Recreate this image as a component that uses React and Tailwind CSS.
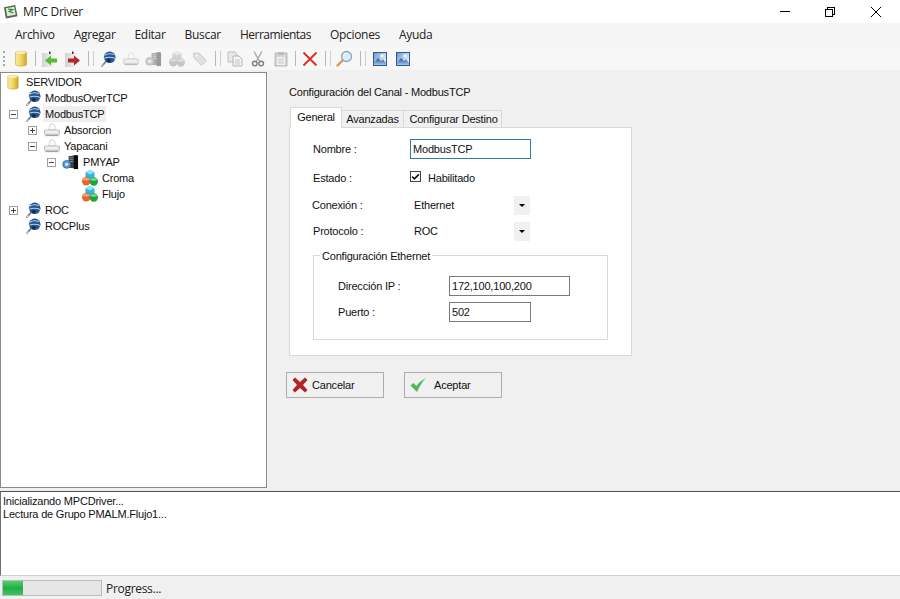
import { Check } from 'lucide-react'

const segoe = { fontFamily: '"Open Sans", "Noto Sans", sans-serif', letterSpacing: '-0.3px' }

function DbIcon({ className = 'w-[12px] h-[17px]' }) {
  return (
    <svg viewBox="0 0 12 17" className={className}>
      <defs>
        <linearGradient id="db" x1="0" x2="1" y1="0" y2="0">
          <stop offset="0" stopColor="#f9eba0" />
          <stop offset="0.5" stopColor="#f4d65c" />
          <stop offset="1" stopColor="#cfa52a" />
        </linearGradient>
      </defs>
      <path d="M0.5 2.5C0.5 0.8 11.5 0.8 11.5 2.5V14.5C11.5 16.6 0.5 16.6 0.5 14.5Z" fill="url(#db)" stroke="#b9983a" strokeWidth="0.5" />
      <ellipse cx="6" cy="2.6" rx="5" ry="1.4" fill="#fbf1b8" />
    </svg>
  )
}

function ChannelIcon() {
  return (
    <svg viewBox="0 0 16 16" className="w-[16px] h-[16px]">
      <path d="M1.5 15.5L6 10.5" stroke="#6f7b88" strokeWidth="1.7" />
      <path d="M0.8 14.8L3.8 14" stroke="#c4ccd4" strokeWidth="1" />
      <circle cx="9.7" cy="6.3" r="5.8" fill="#27558f" />
      <path d="M5 4.2C7 2.6 10 2.2 13.8 3.6M4.2 7.2C7.5 5.8 11.5 6 15.3 7.4" stroke="#b5d0ec" strokeWidth="1.1" fill="none" />
      <circle cx="8.8" cy="9.6" r="1.9" fill="#122f5a" />
    </svg>
  )
}

function DeviceIcon({ muted }) {
  return (
    <svg viewBox="0 0 16 16" className={muted ? 'w-[16px] h-[16px] opacity-70' : 'w-[16px] h-[16px]'}>
      <path d="M4.5 7.5L6.5 2H10L12 7.5Z" fill="#fbfbfb" stroke="#c8c8c8" strokeWidth="0.7" />
      <path d="M0.5 8H15.5V12.5H0.5Z" fill="#e4e4e4" stroke="#bcbcbc" strokeWidth="0.7" />
      <path d="M1.5 13.5H14.5" stroke="#a4a4a4" strokeWidth="1.3" />
      <path d="M3 10H13" stroke="#fafafa" strokeWidth="1.2" />
    </svg>
  )
}

function ServerIcon({ muted }) {
  return (
    <svg viewBox="0 0 18 16" className={muted ? 'w-[17px] h-[16px] opacity-40 grayscale' : 'w-[17px] h-[16px]'}>
      <path d="M7 2L16 0.5V15L7 14Z" fill="#3a3f47" />
      <path d="M12.5 1H17V15.5H12.5Z" fill="#0c0e12" />
      <path d="M8 3.5H12M8 5.5H12M8 7.5H12" stroke="#98a2af" strokeWidth="0.8" />
      <circle cx="5" cy="10.5" r="4.2" fill="#5a9ad0" stroke="#2c5e8d" strokeWidth="0.8" />
      <circle cx="5" cy="10.5" r="1.6" fill="#d9ebf8" />
    </svg>
  )
}

function GroupIcon({ muted }) {
  return (
    <svg viewBox="0 0 16 16" className={muted ? 'w-[16px] h-[16px] opacity-40 grayscale' : 'w-[16px] h-[16px]'}>
      <path d="M8 0L12.5 2.3V7L8 9.3L3.5 7V2.3Z" fill="#2fb3e8" />
      <path d="M3.5 2.3L8 4.6L12.5 2.3L8 0Z" fill="#93e2f8" />
      <circle cx="4.2" cy="11.3" r="4.2" fill="#e4662a" />
      <path d="M0.6 9.5C2 7.6 6.4 7.6 7.8 9.5C6.4 11 2 11 0.6 9.5Z" fill="#f5a677" />
      <circle cx="11.8" cy="11.5" r="4.2" fill="#1fa33a" />
      <path d="M8.2 9.7C9.6 7.8 14 7.8 15.4 9.7C14 11.2 9.6 11.2 8.2 9.7Z" fill="#77da88" />
    </svg>
  )
}

function TagIcon() {
  return (
    <svg viewBox="0 0 16 16" className="w-[16px] h-[16px]">
      <path d="M1.5 2H7L14.5 9.5L9.5 14.5L2 7Z" fill="#e0e0e0" stroke="#c8c8c8" strokeWidth="0.8" />
      <circle cx="4.5" cy="4.8" r="1" fill="#fafafa" />
    </svg>
  )
}

function ArrowDoc({ color, right }) {
  return (
    <svg viewBox="0 0 16 16" className="w-[16px] h-[16px]">
      <defs>
        <linearGradient id="paper" x1="0" x2="1" y1="0" y2="0">
          <stop offset="0" stopColor="#d2d2d2" />
          <stop offset="1" stopColor="#f4f4f4" />
        </linearGradient>
      </defs>
      <path d="M0 2H12V16H0Z" fill="url(#paper)" />
      <path d="M7 0.5H8.5V3H7Z" fill="#333" />
      {right
        ? <path d="M3 7.5H9V4.5L15 9.5L9 14.5V11.5H3Z" fill={color} />
        : <path d="M15 7.5H9V4.5L3 9.5L9 14.5V11.5H15Z" fill={color} />}
    </svg>
  )
}

function CopyIcon() {
  return (
    <svg viewBox="0 0 16 16" className="w-[16px] h-[16px]">
      <path d="M1 1H8L10 3V11H1Z" fill="#e8e8e8" stroke="#b3b3b3" strokeWidth="0.8" />
      <path d="M6 5H12L15 8V15H6Z" fill="#f4f4f4" stroke="#a8a8a8" strokeWidth="0.8" />
      <path d="M8 9H13M8 11H13M8 13H13" stroke="#bdbdbd" strokeWidth="0.8" />
    </svg>
  )
}

function CutIcon() {
  return (
    <svg viewBox="0 0 16 16" className="w-[16px] h-[16px]">
      <path d="M4 0.5L9.5 10M12 0.5L6.5 10" stroke="#a9a9a9" strokeWidth="1.4" />
      <circle cx="4.8" cy="12.5" r="2.3" fill="none" stroke="#7f7f7f" strokeWidth="1.4" />
      <circle cx="11.2" cy="12.5" r="2.3" fill="none" stroke="#7f7f7f" strokeWidth="1.4" />
    </svg>
  )
}

function PasteIcon() {
  return (
    <svg viewBox="0 0 16 16" className="w-[16px] h-[16px]">
      <path d="M2 2H14V15H2Z" fill="#d5d5d5" stroke="#adadad" strokeWidth="0.8" />
      <path d="M5 1H11V4H5Z" fill="#bdbdbd" />
      <path d="M4 6H12V14H4Z" fill="#f2f2f2" />
      <path d="M5 8H11M5 10H11M5 12H11" stroke="#c0c0c0" strokeWidth="0.8" />
    </svg>
  )
}

function MagnifierIcon() {
  return (
    <svg viewBox="0 0 17 17" className="w-[17px] h-[17px]">
      <path d="M1.5 15.5L6.5 10.5" stroke="#d79a52" strokeWidth="2.4" strokeLinecap="round" />
      <circle cx="10.5" cy="6.5" r="5" fill="#d8eefb" stroke="#8fa6b8" strokeWidth="1.3" />
      <path d="M7.5 6C8 4.5 9.5 3.5 11 3.5" stroke="#fff" strokeWidth="1" fill="none" />
    </svg>
  )
}

function PictureIcon() {
  return (
    <svg viewBox="0 0 14 14" className="w-[14px] h-[14px]">
      <defs>
        <linearGradient id="sky" x1="0" x2="1" y1="0" y2="0.6">
          <stop offset="0" stopColor="#6f9bcf" />
          <stop offset="1" stopColor="#e4eef8" />
        </linearGradient>
        <linearGradient id="hill" x1="0" x2="0" y1="0" y2="1">
          <stop offset="0" stopColor="#1f4f92" />
          <stop offset="1" stopColor="#a9c6e6" />
        </linearGradient>
      </defs>
      <path d="M0 0H14V14H0Z" fill="#2a5c9c" />
      <path d="M1 1H13V13H1Z" fill="url(#sky)" />
      <circle cx="9" cy="3.8" r="1.6" fill="#f6f8fb" />
      <path d="M1 11L5 6L8 9L10 7.5L13 11V13H1Z" fill="url(#hill)" />
    </svg>
  )
}

function ToolButton({ children }) {
  return <div className="w-[23px] h-[23px] flex items-center justify-center shrink-0">{children}</div>
}

function ToolSep() {
  return (
    <div className="w-[6px] h-[23px] flex items-center justify-center shrink-0">
      <div className="w-[1px] h-[15px] bg-[#b8b8b8]" />
    </div>
  )
}

function ToolSepDouble() {
  return (
    <div className="w-[12px] h-[23px] flex items-center pl-[4px] gap-[4px] shrink-0">
      <div className="w-[1px] h-[15px] bg-[#b8b8b8]" />
      <div className="w-[1px] h-[15px] bg-[#cfcfcf]" />
    </div>
  )
}

function Expander({ open }) {
  return (
    <div className="w-[19px] h-[16px] flex items-center justify-center shrink-0">
      <div className="w-[9px] h-[9px] border border-[#a0a0a0] bg-white flex items-center justify-center relative">
        <div className="w-[5px] h-[1px] bg-[#444]" />
        {!open && <div className="absolute w-[1px] h-[5px] bg-[#444]" />}
      </div>
    </div>
  )
}

function TreeRow({ indent, expander, icon, selected, children }) {
  return (
    <div className={`flex items-center h-[16px] ${indent}`}>
      {expander ? <Expander open={expander === 'open'} /> : <div className="w-[19px] shrink-0" />}
      <div className="w-[19px] h-[16px] flex items-center justify-center shrink-0">{icon}</div>
      <span className={selected ? 'ml-[1px] px-[2px] h-[16px] leading-[16px] bg-[#efefef]' : 'ml-[1px] px-[2px] h-[16px] leading-[16px]'}>
        {children}
      </span>
    </div>
  )
}

function FieldLabel({ children, className = 'w-[97px]' }) {
  return <div className={`${className} shrink-0`}>{children}</div>
}

function DropArrow() {
  return (
    <div className="w-[16px] h-[19px] bg-[#f0f0f0] flex items-center justify-center">
      <div className="border-x-[3px] border-x-transparent border-t-[3px] border-t-black" />
    </div>
  )
}

function SelectRow({ label, value, rowClass, labelClass }) {
  return (
    <div className={`flex items-center ${rowClass}`}>
      <FieldLabel className={labelClass}>{label}</FieldLabel>
      <div className="w-[100px]">{value}</div>
      <DropArrow />
    </div>
  )
}

export default function App() {
  return (
    <div className="w-[900px] h-[599px] flex flex-col overflow-hidden bg-[#f0f0f0] text-[11px] tracking-[-0.2px] text-[#111]" style={{ fontFamily: '"Liberation Sans", Arial, sans-serif' }}>
      <div className="h-[23px] bg-white flex items-center shrink-0">
        <svg viewBox="0 0 16 16" className="w-[15px] h-[15px] ml-[3px]">
          <path d="M1 3.5L13 1L15.5 13L3 15.5Z" fill="#59665a" />
          <path d="M3 4.5L12 3L13.5 11.5L4.5 13Z" fill="#dcefd2" />
          <path d="M5.5 5.5L10.5 6L6.5 8L11 9.5" stroke="#2f8f3f" strokeWidth="1.2" fill="none" />
        </svg>
        <span className="ml-[5px] text-[12px] text-[#222]" style={segoe}>MPC Driver</span>
        <div className="ml-auto flex items-center">
          <div className="w-[10px] h-[1px] bg-black mr-[35px]" />
          <div className="relative w-[10px] h-[10px] mr-[36px]">
            <div className="absolute right-0 top-0 w-[8px] h-[8px] border border-black" />
            <div className="absolute left-0 bottom-0 w-[8px] h-[8px] border border-black bg-white" />
          </div>
          <svg viewBox="0 0 10 10" className="w-[10px] h-[10px] mr-[19px]">
            <path d="M0 0L10 10M10 0L0 10" stroke="#000" strokeWidth="1" />
          </svg>
        </div>
      </div>

      <div className="h-[24px] bg-[#f5f5f5] flex items-center pl-[15px] gap-[19px] shrink-0 text-[12px] text-[#222]" style={segoe}>
        <span>Archivo</span>
        <span>Agregar</span>
        <span>Editar</span>
        <span>Buscar</span>
        <span className="tracking-[-0.5px]">Herramientas</span>
        <span>Opciones</span>
        <span>Ayuda</span>
      </div>

      <div className="h-[23px] bg-[#f7f7f7] flex items-center shrink-0">
        <div className="ml-[3px] mr-[3px] w-[3px] h-[15px] border-l-2 border-dotted border-[#a8a8a8]" />
        <ToolButton><DbIcon /></ToolButton>
        <ToolSep />
        <ToolButton><ArrowDoc color="#58bb32" /></ToolButton>
        <ToolButton><ArrowDoc color="#b3262a" right /></ToolButton>
        <ToolSepDouble />
        <ToolButton><ChannelIcon /></ToolButton>
        <ToolButton><DeviceIcon muted /></ToolButton>
        <ToolButton><ServerIcon muted /></ToolButton>
        <ToolButton><GroupIcon muted /></ToolButton>
        <ToolButton><TagIcon /></ToolButton>
        <ToolSepDouble />
        <ToolButton><CopyIcon /></ToolButton>
        <ToolButton><CutIcon /></ToolButton>
        <ToolButton><PasteIcon /></ToolButton>
        <ToolSep />
        <ToolButton>
          <svg viewBox="0 0 14 14" className="w-[14px] h-[14px]">
            <path d="M0.5 0.5L13.5 13.5M13.5 0.5L0.5 13.5" stroke="#d8342c" strokeWidth="2" />
          </svg>
        </ToolButton>
        <ToolSepDouble />
        <ToolButton><MagnifierIcon /></ToolButton>
        <ToolSepDouble />
        <ToolButton><PictureIcon /></ToolButton>
        <ToolButton><PictureIcon /></ToolButton>
      </div>

      <div className="flex-1 flex min-h-0">
        <div className="w-[267px] mt-[2px] mb-[3px] border border-[#8a8a8a] bg-white pt-[1px] shrink-0">
          <div className="flex items-center h-[16px] pl-[6px]">
            <div className="w-[12px] h-[16px] flex items-center justify-center shrink-0"><DbIcon className="w-[12px] h-[16px]" /></div>
            <span className="ml-[7px]">SERVIDOR</span>
          </div>
          <TreeRow indent="pl-[3px]" icon={<ChannelIcon />}>ModbusOverTCP</TreeRow>
          <TreeRow indent="pl-[3px]" expander="open" icon={<ChannelIcon />} selected>ModbusTCP</TreeRow>
          <TreeRow indent="pl-[22px]" expander="closed" icon={<DeviceIcon />}>Absorcion</TreeRow>
          <TreeRow indent="pl-[22px]" expander="open" icon={<DeviceIcon />}>Yapacani</TreeRow>
          <TreeRow indent="pl-[41px]" expander="open" icon={<ServerIcon />}>PMYAP</TreeRow>
          <TreeRow indent="pl-[60px]" icon={<GroupIcon />}>Croma</TreeRow>
          <TreeRow indent="pl-[60px]" icon={<GroupIcon />}>Flujo</TreeRow>
          <TreeRow indent="pl-[3px]" expander="closed" icon={<ChannelIcon />}>ROC</TreeRow>
          <TreeRow indent="pl-[3px]" icon={<ChannelIcon />}>ROCPlus</TreeRow>
        </div>

        <div className="flex-1 pl-[19px] pt-[15px]">
          <div className="ml-[3px] h-[14px] leading-[14px]">Configuración del Canal - ModbusTCP</div>
          <div className="flex ml-[3px] mt-[10px] h-[18px] items-end relative z-10 pl-[1px] whitespace-nowrap">
            <div className="w-[52px] h-[21px] bg-white border border-b-0 border-[#d9d9d9] flex items-center justify-center -mb-[1px] pb-[2px]">General</div>
            <div className="w-[62px] h-[17px] bg-[#f0f0f0] border border-l-0 border-b-0 border-[#d9d9d9] flex items-center justify-center">Avanzadas</div>
            <div className="w-[98px] h-[17px] bg-[#f0f0f0] border border-l-0 border-b-0 border-[#d9d9d9] flex items-center justify-center pl-[2px]">Configurar Destino</div>
          </div>
          <div className="ml-[3px] w-[343px] h-[229px] bg-white border border-[#d9d9d9] pl-[23px] pt-[11px]">
            <div className="flex items-center h-[20px]">
              <FieldLabel>Nombre :</FieldLabel>
              <div className="w-[121px] h-[20px] border border-[#2f7d9e] px-[2px] leading-[18px]">ModbusTCP</div>
            </div>
            <div className="flex items-start h-[14px] mt-[12px]">
              <FieldLabel className="w-[97px] leading-[14px]">Estado :</FieldLabel>
              <div className="w-[11px] h-[11px] border border-[#444] flex items-center justify-center">
                <Check className="w-[10px] h-[10px] text-black" strokeWidth={4} />
              </div>
              <span className="ml-[7px] leading-[14px]">Habilitado</span>
            </div>
            <SelectRow label="Conexión :" value="Ethernet" rowClass="h-[19px] mt-[11px] -ml-[1px]" labelClass="w-[102px]" />
            <SelectRow label="Protocolo :" value="ROC" rowClass="h-[19px] mt-[7px]" labelClass="w-[101px]" />

            <div className="relative w-[295px] h-[85px] mt-[14px] border border-[#d9d9d9] pl-[24px] pt-[20px]">
              <div className="absolute left-[6px] -top-[7px] bg-white px-[2px] h-[14px] leading-[14px]">Configuración Ethernet</div>
              <div className="flex items-center h-[20px]">
                <div className="w-[111px] shrink-0">Dirección IP :</div>
                <div className="w-[121px] h-[20px] border border-[#7a7a7a] px-[2px] leading-[18px]">172,100,100,200</div>
              </div>
              <div className="flex items-center h-[20px] mt-[6px]">
                <div className="w-[111px] shrink-0">Puerto :</div>
                <div className="w-[82px] h-[20px] border border-[#7a7a7a] px-[2px] leading-[18px]">502</div>
              </div>
            </div>
          </div>

          <div className="flex gap-[20px] mt-[16px]">
            <div className="w-[98px] h-[26px] border border-[#adadad] bg-[#f0f0f0] flex items-center pl-[5px]">
              <svg viewBox="0 0 16 16" className="w-[16px] h-[16px]">
                <path d="M0.5 3L3 0.5L8 5L13 0.5L15.5 3L11 8L15.5 13L13 15.5L8 11L3 15.5L0.5 13L5 8Z" fill="#b0242a" />
              </svg>
              <span className="ml-[4px]">Cancelar</span>
            </div>
            <div className="w-[98px] h-[26px] border border-[#adadad] bg-[#f0f0f0] flex items-center pl-[5px]">
              <svg viewBox="0 0 16 16" className="w-[16px] h-[16px]">
                <path d="M0.5 8.5L3.5 6L6.5 9C8.5 6 11.5 3 15.5 1.5C12 5 9.5 9.5 7 15Z" fill="#4fb55c" stroke="#a2dba8" strokeWidth="0.5" />
              </svg>
              <span className="ml-[8px]">Aceptar</span>
            </div>
          </div>
        </div>
      </div>

      <div className="h-[85px] shrink-0 bg-white border-t border-l border-b border-t-[#4f4f4f] border-l-[#6f6f6f] border-b-[#d0d0d0] pl-[2px] pt-[3px] leading-[13px]">
        <div>Inicializando MPCDriver...</div>
        <div>Lectura de Grupo PMALM.Flujo1...</div>
      </div>

      <div className="h-[23px] shrink-0 flex items-center pl-[2px]">
        <div className="w-[100px] h-[16px] border border-[#bcbcbc] bg-[#e6e6e6]">
          <div className="w-[20px] h-full bg-gradient-to-b from-[#4ed06e] via-[#1fae45] to-[#3cc45f]" />
        </div>
        <span className="ml-[4px] pt-[2px] text-[12px] text-[#222]" style={segoe}>Progress...</span>
      </div>
    </div>
  )
}
